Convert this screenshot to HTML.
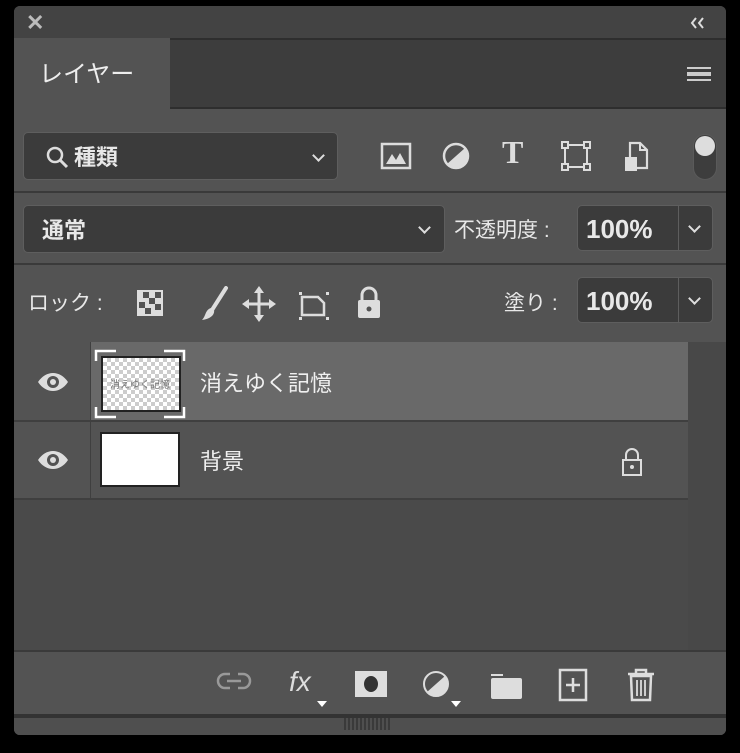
<!DOCTYPE html>
<html><head><meta charset="utf-8"><style>
*{margin:0;padding:0;box-sizing:border-box}
body{width:740px;height:753px;background:#000;position:relative;overflow:hidden;font-family:"Liberation Sans","Noto Sans CJK JP",sans-serif;color:#e8e8e8}
.a{position:absolute}
.panel{left:14px;top:6px;width:712px;height:729px;background:#535353;border-radius:6px;overflow:hidden}
.box{position:absolute;background:#3b3b3b;border:1px solid #5e5e5e;border-radius:5px}
.t{position:absolute;white-space:nowrap}
.chev{position:absolute;width:9px;height:9px;border-right:2px solid #ddd;border-bottom:2px solid #ddd;transform:rotate(45deg)}
</style></head><body>
<div class="a panel">
 <div class="a" style="left:0;top:0;width:712px;height:32px;background:#434343"></div>
 <div class="t" style="left:12px;top:4px;font-size:22px;font-weight:bold;color:#bbb">✕</div>
 <svg class="a" style="left:676px;top:11px" width="16" height="12"><path d="M6 1 L2 6 L6 11 M13 1 L9 6 L13 11" fill="none" stroke="#ddd" stroke-width="2"/></svg>
 <div class="a" style="left:0;top:32px;width:712px;height:70px;background:#3d3d3d;border-top:2px solid #2e2e2e"></div>
 <div class="a" style="left:0;top:32px;width:156px;height:72px;background:#535353"></div>
 <div class="t" style="left:25px;top:48px;font-size:24px;color:#eee">レイヤー</div>
 <div class="a" style="left:673px;top:61px;width:24px;height:14px;border-top:2px solid #ccc;border-bottom:2px solid #ccc"></div>
 <div class="a" style="left:673px;top:66px;width:24px;height:4px;border-top:2px solid #ccc;border-bottom:2px solid #ccc"></div>
 <div class="a" style="left:156px;top:101px;width:556px;height:2px;background:#2e2e2e"></div>

 <div class="box" style="left:9px;top:126px;width:315px;height:48px"></div>
 <svg class="a" style="left:32px;top:140px" width="24" height="24"><circle cx="9" cy="9" r="7" fill="none" stroke="#ddd" stroke-width="2.5"/><path d="M14 14 L21 21" stroke="#ddd" stroke-width="3"/></svg>
 <div class="t" style="left:60px;top:134px;font-size:22px;font-weight:bold">種類</div>
 <div class="chev" style="left:300px;top:145px"></div>
 <svg class="a" style="left:366px;top:134px" width="32" height="32"><rect x="2" y="4" width="28" height="24" fill="none" stroke="#ddd" stroke-width="2.5"/><path d="M6 24 L12 14 L16 20 L20 13 L26 24Z" fill="#ddd"/></svg>
 <svg class="a" style="left:428px;top:134px" width="30" height="32"><circle cx="14" cy="16" r="12" fill="#ddd"/><path d="M23 8 A12 12 0 0 0 5 24 Z" fill="#535353"/><circle cx="14" cy="16" r="12" fill="none" stroke="#ddd" stroke-width="2.5"/></svg>
 <div class="t" style="left:488px;top:128px;font-size:32px;font-weight:bold;font-family:'Liberation Serif',serif;color:#ddd">T</div>
 <svg class="a" style="left:546px;top:134px" width="32" height="32"><rect x="5" y="5" width="22" height="22" fill="none" stroke="#ddd" stroke-width="2"/><g fill="#535353" stroke="#ddd" stroke-width="2"><rect x="2" y="2" width="6" height="6"/><rect x="24" y="2" width="6" height="6"/><rect x="2" y="24" width="6" height="6"/><rect x="24" y="24" width="6" height="6"/></g></svg>
 <svg class="a" style="left:608px;top:134px" width="28" height="32"><path d="M8 3 H18 L25 10 V28 H8 Z" fill="none" stroke="#ddd" stroke-width="2.2"/><path d="M18 3 V10 H25" fill="none" stroke="#ddd" stroke-width="2"/><rect x="3" y="17" width="12" height="14" fill="#ddd"/></svg>
 <div class="a" style="left:679px;top:128px;width:24px;height:46px;border-radius:12px;background:#3d3d3d;border:1px solid #5a5a5a"></div>
 <div class="a" style="left:681px;top:130px;width:20px;height:20px;border-radius:10px;background:#ddd"></div>
 <div class="a" style="left:0;top:185px;width:712px;height:2px;background:#3a3a3a"></div>

 <div class="box" style="left:9px;top:199px;width:422px;height:48px"></div>
 <div class="t" style="left:28px;top:207px;font-size:22px;font-weight:bold">通常</div>
 <div class="chev" style="left:406px;top:217px"></div>
 <div class="t" style="left:440px;top:208px;font-size:21px">不透明度 :</div>
 <div class="box" style="left:563px;top:199px;width:136px;height:46px"></div>
 <div class="a" style="left:664px;top:200px;width:1px;height:44px;background:#5e5e5e"></div>
 <div class="t" style="left:572px;top:208px;font-size:26px;font-weight:bold">100%</div>
 <div class="chev" style="left:676px;top:216px"></div>
 <div class="a" style="left:0;top:257px;width:712px;height:2px;background:#3a3a3a"></div>

 <div class="t" style="left:14px;top:281px;font-size:21px">ロック :</div>
 <svg class="a" style="left:122px;top:283px" width="30" height="30"><rect x="1" y="1" width="26" height="26" fill="#ddd"/><g fill="#535353"><rect x="7" y="3" width="6" height="6"/><rect x="19" y="3" width="6" height="6"/><rect x="13" y="9" width="6" height="6"/><rect x="3" y="13" width="6" height="6"/><rect x="19" y="15" width="6" height="6"/><rect x="9" y="19" width="6" height="6"/></g></svg>
 <svg class="a" style="left:186px;top:280px" width="30" height="36"><path d="M26 2 L12 24" stroke="#ddd" stroke-width="4" stroke-linecap="round"/><path d="M11 22 C5 24 6 30 2 34 C10 33 15 29 14 24Z" fill="#ddd"/></svg>
 <svg class="a" style="left:228px;top:280px" width="34" height="36"><g stroke="#ddd" stroke-width="3" fill="none"><path d="M17 4 V32 M3 18 H31"/></g><g fill="#ddd"><path d="M17 0 L22 7 H12Z M17 36 L22 29 H12Z M0 18 L7 13 V23Z M34 18 L27 13 V23Z"/></g></svg>
 <svg class="a" style="left:282px;top:283px" width="36" height="32"><path d="M6 8 H22 L28 14 V26 H6 Z" fill="none" stroke="#ddd" stroke-width="2.5"/><g fill="#ddd"><rect x="3" y="3" width="3" height="3"/><rect x="30" y="3" width="3" height="3"/><rect x="3" y="28" width="3" height="3"/><rect x="30" y="28" width="3" height="3"/></g></svg>
 <svg class="a" style="left:342px;top:280px" width="26" height="34"><path d="M6 14 V9 A7 7 0 0 1 20 9 V14" fill="none" stroke="#ddd" stroke-width="3"/><rect x="2" y="14" width="22" height="18" rx="2" fill="#ddd"/><circle cx="13" cy="23" r="2.5" fill="#535353"/></svg>
 <div class="t" style="left:490px;top:281px;font-size:21px">塗り :</div>
 <div class="box" style="left:563px;top:271px;width:136px;height:46px"></div>
 <div class="a" style="left:664px;top:272px;width:1px;height:44px;background:#5e5e5e"></div>
 <div class="t" style="left:572px;top:280px;font-size:26px;font-weight:bold">100%</div>
 <div class="chev" style="left:676px;top:288px"></div>

 <div class="a" style="left:0;top:336px;width:712px;height:393px;background:#4a4a4a"></div>
 <div class="a" style="left:674px;top:336px;width:38px;height:310px;background:#484848"></div>
 <div class="a" style="left:0;top:336px;width:674px;height:78px;background:#535353"></div>
 <div class="a" style="left:77px;top:336px;width:597px;height:78px;background:#696969"></div>
 <div class="a" style="left:0;top:414px;width:674px;height:2px;background:#3f3f3f"></div>
 <div class="a" style="left:0;top:416px;width:674px;height:76px;background:#535353"></div>
 <div class="a" style="left:76px;top:336px;width:1px;height:156px;background:#3f3f3f"></div>
 <div class="a" style="left:0;top:492px;width:674px;height:2px;background:#3f3f3f"></div>
 <svg class="a" style="left:22px;top:364px" width="34" height="24"><path d="M2 12 C10 0 24 0 32 12 C24 24 10 24 2 12Z" fill="#ddd"/><circle cx="17" cy="12" r="6" fill="#535353"/><circle cx="17" cy="12" r="3" fill="#ddd"/></svg>
 <svg class="a" style="left:22px;top:442px" width="34" height="24"><path d="M2 12 C10 0 24 0 32 12 C24 24 10 24 2 12Z" fill="#ddd"/><circle cx="17" cy="12" r="6" fill="#535353"/><circle cx="17" cy="12" r="3" fill="#ddd"/></svg>
 <div class="a" style="left:87px;top:350px;width:80px;height:56px;border:2px solid #222;background-color:#fff;background-image:linear-gradient(45deg,#ccc 25%,transparent 25%,transparent 75%,#ccc 75%),linear-gradient(45deg,#ccc 25%,transparent 25%,transparent 75%,#ccc 75%);background-size:8px 8px;background-position:0 0,4px 4px"></div>
 <div class="t" style="left:96px;top:370px;font-size:10px;color:#777">消えゆく記憶</div>
 <svg class="a" style="left:80px;top:343px" width="92" height="70"><g stroke="#fff" stroke-width="2.5" fill="none"><path d="M2 12 V2 H22 M70 2 H90 V12 M2 58 V68 H22 M70 68 H90 V58"/></g></svg>
 <div class="t" style="left:186px;top:360px;font-size:22px;color:#f0f0f0">消えゆく記憶</div>
 <div class="a" style="left:86px;top:426px;width:80px;height:55px;background:#fff;border:2px solid #222"></div>
 <div class="t" style="left:186px;top:438px;font-size:22px;color:#f0f0f0">背景</div>
 <svg class="a" style="left:606px;top:440px" width="24" height="32"><path d="M6 14 V9 A6 6 0 0 1 18 9 V14" fill="none" stroke="#ddd" stroke-width="2"/><rect x="3" y="14" width="18" height="15" fill="none" stroke="#ddd" stroke-width="2"/><circle cx="12" cy="21" r="2" fill="#ddd"/></svg>

 <div class="a" style="left:0;top:644px;width:712px;height:2px;background:#3a3a3a"></div>
 <div class="a" style="left:0;top:646px;width:712px;height:62px;background:#535353"></div>
 <svg class="a" style="left:202px;top:663px" width="40" height="24"><g fill="none" stroke="#999" stroke-width="2.5"><path d="M14 5 H9 A7 7 0 0 0 9 19 H14 M22 5 H27 A7 7 0 0 1 27 19 H22 M11 12 H25"/></g></svg>
 <div class="t" style="left:275px;top:660px;font-size:28px;font-style:italic;color:#ddd">fx</div>
 <svg class="a" style="left:303px;top:695px" width="10" height="6"><path d="M0 0 H10 L5 6Z" fill="#fff"/></svg>
 <svg class="a" style="left:340px;top:664px" width="34" height="28"><rect x="1" y="1" width="32" height="26" fill="#ddd"/><ellipse cx="17" cy="14" rx="7" ry="8" fill="#333"/></svg>
 <svg class="a" style="left:408px;top:664px" width="32" height="30"><circle cx="14" cy="14" r="12" fill="#ddd"/><path d="M23 6 A12 12 0 0 0 5 22 Z" fill="#535353"/><circle cx="14" cy="14" r="12" fill="none" stroke="#ddd" stroke-width="2"/></svg>
 <svg class="a" style="left:437px;top:695px" width="10" height="6"><path d="M0 0 H10 L5 6Z" fill="#fff"/></svg>
 <svg class="a" style="left:476px;top:666px" width="34" height="28"><path d="M1 4 H13 V2 H1Z" fill="#ddd"/><rect x="1" y="6" width="31" height="21" rx="2" fill="#ddd"/></svg>
 <svg class="a" style="left:544px;top:662px" width="30" height="34"><rect x="2" y="2" width="26" height="30" fill="none" stroke="#ddd" stroke-width="2.5"/><path d="M15 10 V24 M8 17 H22" stroke="#ddd" stroke-width="2.5"/></svg>
 <svg class="a" style="left:612px;top:662px" width="30" height="34"><path d="M2 6 H28 M10 6 V2 H20 V6" fill="none" stroke="#ddd" stroke-width="2.5"/><path d="M5 8 H25 L24 32 H6Z" fill="none" stroke="#ddd" stroke-width="2.5"/><path d="M11 12 V28 M15 12 V28 M19 12 V28" stroke="#ddd" stroke-width="1.8"/></svg>
 <div class="a" style="left:0;top:708px;width:712px;height:4px;background:#333"></div>
 <div class="a" style="left:0;top:712px;width:712px;height:17px;background:#4f4f4f"></div>
 <div class="a" style="left:330px;top:712px;width:46px;height:12px;background:repeating-linear-gradient(90deg,#3a3a3a 0 2px,transparent 2px 4px)"></div>
</div>
</body></html>
